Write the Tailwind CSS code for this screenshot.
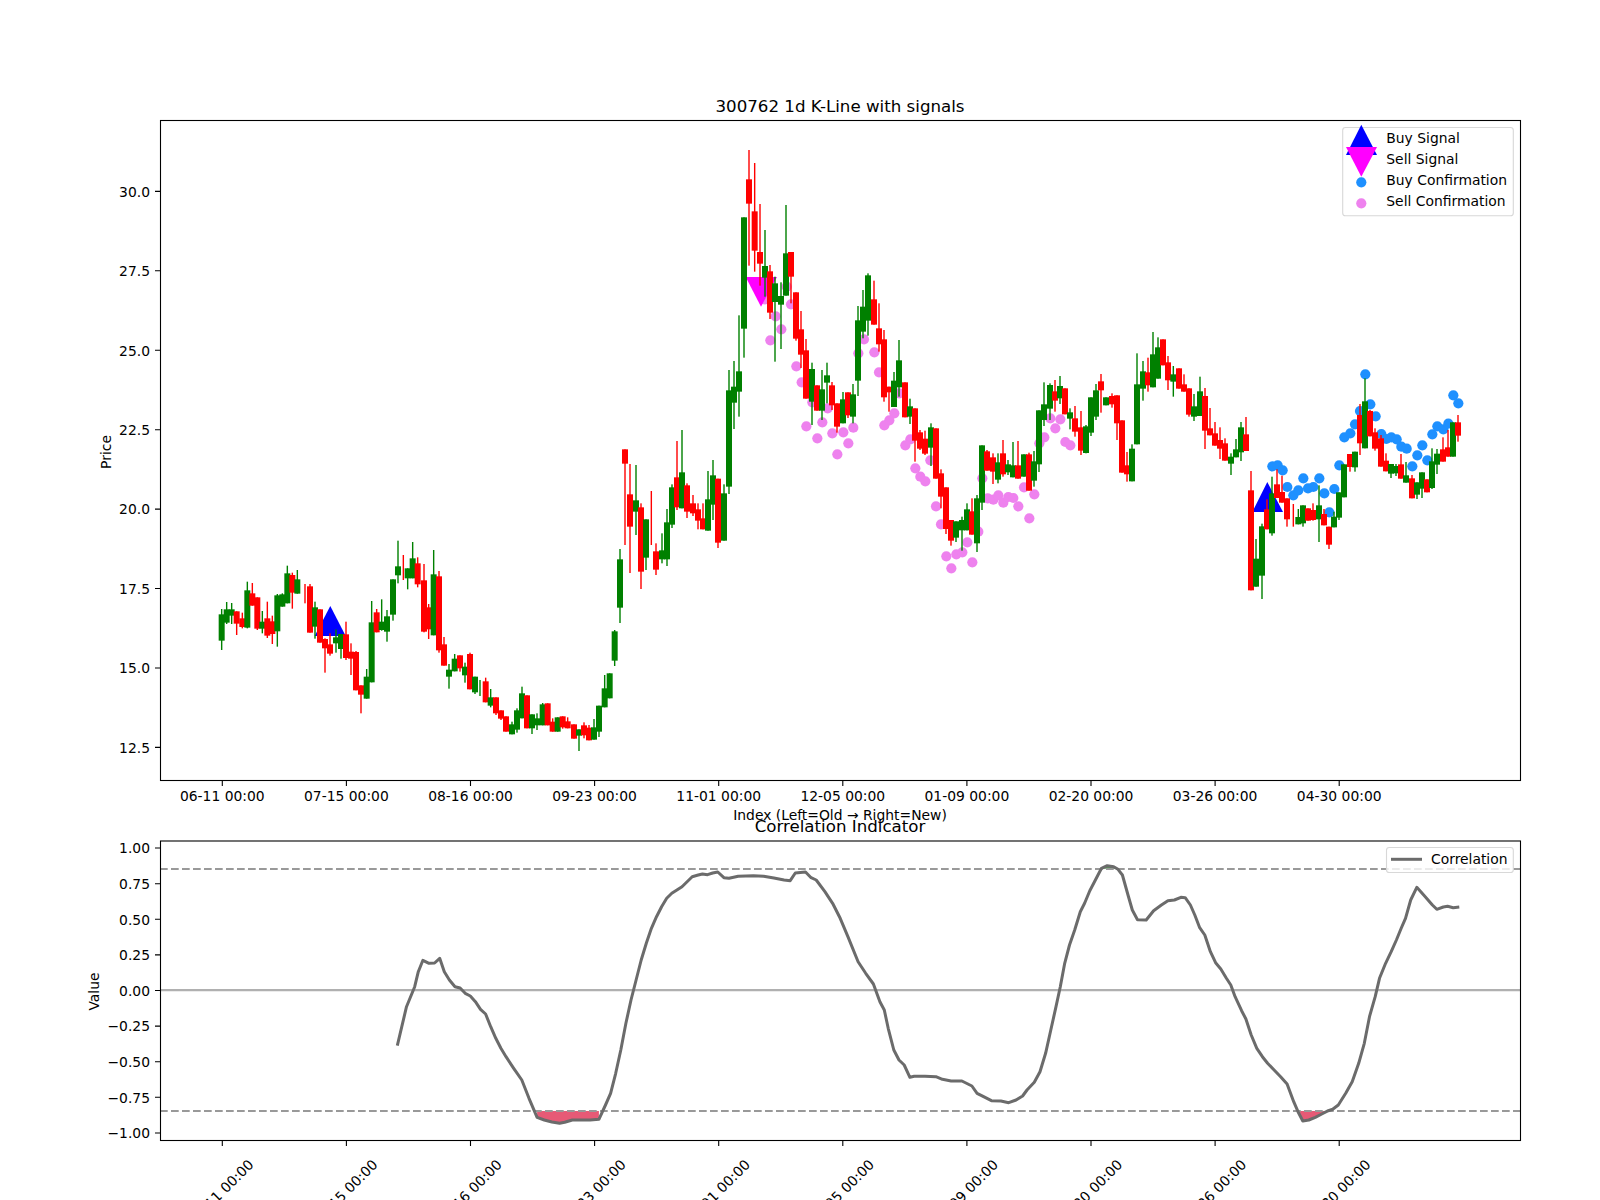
<!DOCTYPE html>
<html lang="en">
<head>
<meta charset="utf-8">
<title>300762 1d K-Line with signals</title>
<script src="https://cdn.jsdelivr.net/npm/@tailwindcss/browser@4"></script>
</head>
<body class="m-0 bg-white">
<main class="w-[1600px] h-[1200px] overflow-hidden bg-white font-['DejaVu_Sans',sans-serif] text-black">
<svg class="block fill-black text-[13.89px]" width="1600" height="1200" viewBox="0 0 1600 1200" xmlns="http://www.w3.org/2000/svg">
  <!-- upper axes -->
  <g id="sellDots" fill="#ee82ee"></g>
  <g id="buyDots" fill="#1e90ff"></g>
  <polygon points="330.3,606 345.7,636 314.7,636" fill="#0000ff"/>
  <polygon points="1267.3,482 1283,512 1252.3,512" fill="#0000ff"/>
  <polygon points="745.7,277 777,277 761,306.7" fill="#ff00ff"/>
  <g id="candles"></g>
  <rect x="160.5" y="120.5" width="1360" height="660" fill="none" stroke="#000" stroke-width="1.1"/>
  <path d="M222.3 781V786M346.4 781V786M470.5 781V786M594.6 781V786M718.7 781V786M842.8 781V786M966.9 781V786M1091 781V786M1215.1 781V786M1339.2 781V786M160 747.4H155M160 668H155M160 588.5H155M160 509.1H155M160 429.7H155M160 350.3H155M160 270.8H155M160 191.4H155" stroke="#000" stroke-width="1.1" fill="none"/>
  <g text-anchor="middle">
    <text x="222.3" y="801">06-11 00:00</text><text x="346.4" y="801">07-15 00:00</text><text x="470.5" y="801">08-16 00:00</text><text x="594.6" y="801">09-23 00:00</text><text x="718.7" y="801">11-01 00:00</text><text x="842.8" y="801">12-05 00:00</text><text x="966.9" y="801">01-09 00:00</text><text x="1091" y="801">02-20 00:00</text><text x="1215.1" y="801">03-26 00:00</text><text x="1339.2" y="801">04-30 00:00</text>
  </g>
  <g text-anchor="end">
    <text x="150" y="752.7">12.5</text><text x="150" y="673.3">15.0</text><text x="150" y="593.8">17.5</text><text x="150" y="514.4">20.0</text><text x="150" y="435">22.5</text><text x="150" y="355.6">25.0</text><text x="150" y="276.1">27.5</text><text x="150" y="196.7">30.0</text>
  </g>
  <text x="840" y="111.5" text-anchor="middle" class="text-[16.67px]">300762 1d K-Line with signals</text>
  <text x="840" y="820" text-anchor="middle">Index (Left=Old → Right=New)</text>
  <text transform="translate(111 452) rotate(-90)" text-anchor="middle">Price</text>
  <!-- upper legend -->
  <rect x="1342.7" y="127.5" width="170.6" height="88.2" rx="2.8" fill="#fff" fill-opacity="0.8" stroke="#d8d8d8" stroke-width="1.1"/>
  <polygon points="1361.3,124.7 1377,155 1346,155" fill="#0000ff"/>
  <polygon points="1346,147 1377,147 1361.3,176.7" fill="#ff00ff"/>
  <circle cx="1361.3" cy="182.3" r="5.1" fill="#1e90ff"/>
  <circle cx="1361.3" cy="203.3" r="5.1" fill="#ee82ee"/>
  <text x="1386.3" y="143.2">Buy Signal</text>
  <text x="1386.3" y="164">Sell Signal</text>
  <text x="1386.3" y="185">Buy Confirmation</text>
  <text x="1386.3" y="206">Sell Confirmation</text>

  <!-- lower axes -->
  <polygon id="fillA" fill="#dc143c" fill-opacity="0.7"/>
  <polygon id="fillB" fill="#dc143c" fill-opacity="0.7"/>
  <polygon id="fillC" fill="#008000" fill-opacity="0.7"/>
  <path d="M160 869H1520M160 1111H1520" stroke="#999" stroke-width="2.2" stroke-dasharray="7.7 3.3" fill="none"/>
  <path d="M160 990.2H1520" stroke="#b0b0b0" stroke-width="2.2" fill="none"/>
  <polyline id="curve" fill="none" stroke="#6b6b6b" stroke-width="3" stroke-linejoin="round"/>
  <rect x="160.5" y="841" width="1360" height="299.5" fill="none" stroke="#000" stroke-width="1.1"/>
  <path d="M222.3 1141V1146M346.4 1141V1146M470.5 1141V1146M594.6 1141V1146M718.7 1141V1146M842.8 1141V1146M966.9 1141V1146M1091 1141V1146M1215.1 1141V1146M1339.2 1141V1146M160 848H155M160 883.7H155M160 919.3H155M160 954.9H155M160 990.5H155M160 1026.1H155M160 1061.7H155M160 1097.3H155M160 1133H155" stroke="#000" stroke-width="1.1" fill="none"/>
  <g text-anchor="end">
    <text x="150" y="853.3">1.00</text><text x="150" y="889">0.75</text><text x="150" y="924.6">0.50</text><text x="150" y="960.2">0.25</text><text x="150" y="995.8">0.00</text><text x="150" y="1031.4">−0.25</text><text x="150" y="1067">−0.50</text><text x="150" y="1102.6">−0.75</text><text x="150" y="1138.3">−1.00</text>
  </g>
  <g text-anchor="middle">
    <text transform="translate(221 1192) rotate(-45)" y="5">06-11 00:00</text>
    <text transform="translate(345.1 1192) rotate(-45)" y="5">07-15 00:00</text>
    <text transform="translate(469.2 1192) rotate(-45)" y="5">08-16 00:00</text>
    <text transform="translate(593.3 1192) rotate(-45)" y="5">09-23 00:00</text>
    <text transform="translate(717.4 1192) rotate(-45)" y="5">11-01 00:00</text>
    <text transform="translate(841.5 1192) rotate(-45)" y="5">12-05 00:00</text>
    <text transform="translate(965.6 1192) rotate(-45)" y="5">01-09 00:00</text>
    <text transform="translate(1089.7 1192) rotate(-45)" y="5">02-20 00:00</text>
    <text transform="translate(1213.8 1192) rotate(-45)" y="5">03-26 00:00</text>
    <text transform="translate(1337.9 1192) rotate(-45)" y="5">04-30 00:00</text>
  </g>
  <text x="840" y="832" text-anchor="middle" class="text-[16.67px]">Correlation Indicator</text>
  <text transform="translate(99 991.5) rotate(-90)" text-anchor="middle">Value</text>
  <!-- lower legend -->
  <rect x="1386.5" y="847.5" width="126.8" height="25" rx="2.8" fill="#fff" fill-opacity="0.8" stroke="#d8d8d8" stroke-width="1.1"/>
  <path d="M1391 859.3H1422" stroke="#6b6b6b" stroke-width="3" fill="none"/>
  <text x="1431" y="864.2">Correlation</text>
</svg>
</main>
<script>
var NS = 'http://www.w3.org/2000/svg';
function el(parent, tag, attrs) {
  var n = document.createElementNS(NS, tag);
  for (var k in attrs) n.setAttribute(k, attrs[k]);
  parent.appendChild(n);
}
// each section: origin x, origin y, then candles [x, bodyTop, bodyBottom, wickHigh, wickLow, green?]
var sections = [
 [140,500,[[245,343,422,327,450,1],[260,328,368,306,372,1],[275,328,347,309,372,1],[290,334,371,334,405,0],[307,355,381,338,385,0],[322,271,383,245,385,1],[337,280,317,249,317,0],[352,292,386,292,390,0],[367,365,386,333,400,1],[382,355,407,305,414,0],[397,364,402,347,432,0],[412,286,394,282,440,1],[427,283,320,280,320,1],[442,220,310,197,310,1],[457,225,278,218,326,0],[472,238,281,210,281,1],[495,252,253,252,310,0],[510,259,398,252,398,0],[525,322,380,305,416,1],[540,328,428,328,428,0],[555,417,445,415,518,0],[570,433,461,400,467,0],[588,412,430,388,458,1],[603,402,447,402,476,1],[618,403,474,365,480,0],[633,455,476,430,525,0],[648,456,571,453,571,0],[663,556,584,556,640,0],[680,530,596,507,596,1],[695,367,547,303,547,1],[710,337,397,327,397,0],[725,365,390,298,392,1],[741,349,395,330,425,1],[759,238,344,238,362,1],[774,199,226,122,250,1],[790,165,166,165,240,0],[803,205,235,205,268,1],[818,175,235,126,235,1],[833,190,253,172,262,0],[852,241,395,192,397,0],[866,322,388,312,417,0],[881,223,406,150,406,1],[897,229,451,213,458,0],[912,433,497,411,497,0],[927,509,530,492,566,1],[944,476,514,462,514,1],[960,466,505,466,515,0],[975,500,526,488,548,1]]],
 [470,420,[[0,702,808,698,808,0],[15,770,817,770,822,1],[30,780,781,780,828,1],[47,784,847,773,847,0],[62,832,857,807,862,1],[78,832,880,832,885,0],[93,871,896,871,900,0],[108,889,935,889,935,0],[126,913,943,905,943,1],[141,871,929,865,938,1],[156,820,895,800,895,1],[171,826,925,826,925,0],[186,883,925,883,942,1],[201,895,916,880,930,1],[218,853,916,849,916,1],[233,850,916,850,916,0],[248,905,935,895,935,0],[263,892,935,892,935,1],[278,889,922,889,926,0],[293,904,925,892,925,0],[312,913,956,913,956,0],[327,928,947,928,993,1],[342,916,946,907,955,0],[357,923,961,915,961,0],[372,922,959,897,959,1],[387,857,935,857,951,1],[404,805,862,765,862,1],[419,760,835,760,835,1],[434,634,722,630,738,1],[450,418,563,387,609,1],[465,88,131,88,375,0],[480,223,320,132,459,0],[498,241,275,135,345,1],[513,262,455,250,507,0],[528,298,413,298,450,1],[544,213,214,213,375,0],[558,394,449,370,465,0],[576,391,418,340,430,1],[591,307,418,267,438,1],[606,202,314,193,324,1],[621,172,262,63,270,0],[636,157,265,30,265,1],[651,196,275,190,294,0],[669,250,280,225,288,0],[684,268,302,250,328,0],[699,295,328,250,328,0],[714,238,332,153,332,1],[729,166,254,120,300,1],[744,176,368,176,384,0],[762,220,362,193,362,1]]],
 [680,130,[[147,781,1070,720,1092,1],[162,770,818,693,897,1],[177,724,785,556,860,1],[192,262,596,262,683,1],[207,148,221,60,407,0],[224,244,362,99,425,0],[240,366,401,222,467,0],[255,408,443,300,500,1],[270,424,548,405,567,0],[285,460,516,440,695,1],[303,498,524,457,657,1],[318,370,497,225,497,1],[333,366,440,366,520,0],[348,487,626,487,632,0],[363,598,674,543,714,0],[378,661,806,627,806,0],[396,717,815,698,885,1],[411,766,842,766,842,0],[426,778,842,720,870,1],[441,736,758,698,820,1],[456,766,826,756,840,0],[471,820,890,820,908,0],[489,808,880,786,880,1],[504,787,856,787,864,0],[519,793,860,762,880,1],[534,571,752,528,798,1],[549,530,605,480,625,1],[564,436,572,430,617,1],[582,508,584,452,584,0],[597,595,643,520,665,0],[612,628,802,600,815,0],[627,770,787,770,845,0],[642,752,831,726,831,1],[657,691,772,630,800,1],[675,757,862,757,862,0],[690,829,860,806,882,1]]],
 [880,380,[[105,85,182,85,245,0],[120,157,206,150,210,0],[135,176,221,152,225,0],[153,142,203,130,258,1],[168,145,296,145,296,0],[183,280,350,268,385,0],[198,322,447,322,462,0],[213,420,482,420,497,0],[228,424,473,424,486,1],[246,420,451,410,512,1],[261,388,451,370,451,1],[276,394,464,355,464,0],[291,355,490,345,516,1],[306,196,368,196,390,1],[321,214,272,210,272,0],[339,232,275,220,312,0],[354,247,299,220,310,1],[369,220,283,180,290,0],[384,253,277,240,285,1],[399,256,292,186,292,1],[414,256,296,183,296,0],[432,223,290,223,290,1],[447,223,332,218,332,0],[462,244,302,213,320,1]]],
 [1000,320,[[117,271,433,271,456,1],[132,253,300,187,318,1],[150,195,266,190,300,1],[165,214,242,180,275,0],[180,198,235,168,252,1],[195,205,283,205,283,0],[210,277,296,265,328,1],[225,295,335,258,350,0],[243,322,392,273,405,0],[258,319,399,315,400,1],[273,232,338,232,348,1],[288,211,290,192,300,1],[303,184,211,162,278,0],[318,232,256,232,256,1],[336,228,253,220,263,0],[351,226,310,226,360,0],[366,301,458,301,458,0],[381,436,463,396,485,0],[396,386,484,373,484,1],[411,193,373,100,373,1],[429,154,206,123,242,1],[444,157,196,113,215,0],[459,103,202,36,202,1],[474,82,176,52,176,1],[489,58,136,58,136,0],[504,127,181,108,210,0],[520,163,185,138,230,1],[537,145,206,145,206,0],[552,193,215,163,215,0],[567,205,284,205,290,0],[582,259,290,222,303,1]]],
 [1200,360,[[0,94,168,50,168,1],[15,108,212,84,267,0],[30,205,226,144,226,0],[45,220,257,186,257,0],[60,240,266,202,297,0],[75,250,302,235,302,0],[93,290,311,280,345,1],[108,268,292,237,292,1],[123,202,277,186,303,1],[138,223,273,171,273,0],[153,391,691,333,691,0],[168,596,680,537,680,1],[186,499,647,491,717,1],[201,448,508,418,508,0],[216,400,520,350,527,1],[231,373,414,328,414,0],[246,396,428,347,428,0],[261,415,478,415,500,0],[280,432,433,432,500,0],[295,471,493,447,493,1],[309,436,490,436,500,1],[324,445,482,445,482,0],[339,450,480,430,482,0],[357,436,478,376,546,1],[372,462,496,447,496,0],[387,500,554,500,567,0],[402,470,502,455,502,1],[417,397,473,397,480,1],[432,313,412,313,412,1],[450,282,321,282,335,0],[465,275,322,275,335,1],[480,165,250,132,285,0],[495,124,265,55,265,1],[510,153,229,150,229,0],[525,217,266,205,272,0],[543,235,320,225,320,0],[558,302,334,280,334,0],[573,312,341,312,354,1],[588,318,340,312,348,1],[603,313,356,282,356,0],[618,346,368,306,368,1],[636,355,415,345,415,0],[651,367,404,367,417,1],[666,337,386,337,414,1],[681,358,397,358,397,0],[696,304,384,265,387,1],[711,281,314,267,342,1],[729,268,305,232,305,0],[744,262,290,210,290,0],[759,187,290,187,290,1],[774,187,227,165,245,0]]]
];
var cg = document.getElementById('candles');
sections.forEach(function (s) {
  s[2].forEach(function (c) {
    var x = s[0] + c[0] / 3, col = c[5] ? '#008000' : '#ff0000';
    el(cg, 'rect', {x: (x - 0.7).toFixed(2), y: (s[1] + c[3] / 3).toFixed(2), width: 1.4, height: ((c[4] - c[3]) / 3).toFixed(2), fill: col});
    if (c[2] - c[1] > 2) el(cg, 'rect', {x: (x - 3).toFixed(2), y: (s[1] + c[1] / 3).toFixed(2), width: 6, height: ((c[2] - c[1]) / 3).toFixed(2), fill: col});
  });
});
function dots(id, ox, oy, pts) {
  var g = document.getElementById(id);
  pts.forEach(function (p) { el(g, 'circle', {cx: (ox + p[0] / 3).toFixed(2), cy: (oy + p[1] / 3).toFixed(2), r: 5.1}); });
}
dots('sellDots', 680, 130, [[255,508],[320,470],[333,523],[287,559],[304,598],[271,631],[349,709],[365,757],[397,817],[443,835],[379,889],[427,877],[412,925],[457,910],[490,907],[520,893],[505,940],[472,973],[552,628],[535,670],[583,667],[597,727]]);
dots('sellDots', 880, 380, [[58,40],[43,100],[28,121],[13,136],[91,178],[76,196],[151,241],[106,265],[121,290],[136,304],[168,379],[183,433],[199,529],[214,565],[229,523],[247,517],[262,487],[277,547],[295,455],[307,295],[323,355],[340,359],[355,346],[370,368],[385,351],[400,354],[415,379],[432,322],[448,415],[463,343],[478,190],[493,172],[511,115],[526,145],[541,118],[556,186],[571,196]]);
dots('buyDots', 1200, 360, [[217,319],[233,316],[248,331],[262,381],[280,406],[295,391],[310,355],[324,385],[340,381],[358,355],[373,400],[388,457],[403,387],[418,316],[433,232],[451,220],[465,193],[480,153],[496,43],[511,133],[527,169],[544,222],[559,237],[574,232],[590,238],[604,260],[620,266],[637,319],[652,286],[667,256],[682,301],[697,223],[712,199],[730,208],[745,191],[760,106],[775,130]]);
function a(p) { return (80 + p[0] / 1.96).toFixed(1) + ',' + (780 + p[1] / 3).toFixed(1); }
function b(p) { return (860 + p[0] / 2.306).toFixed(1) + ',' + (820 + p[1] / 3).toFixed(1); }
var ca = [[622,797],[640,680],[656,620],[663,575],[672,541],[684,550],[695,549],[705,535],[714,575],[724,600],[735,620],[745,624],[755,640],[765,648],[775,665],[785,688],[795,702],[805,740],[815,775],[825,805],[835,830],[850,865],[866,900],[880,955],[896,1012],[910,1020],[925,1026],[940,1030],[950,1027],[965,1020],[1000,1020],[1017,1018],[1030,975],[1040,940],[1050,880],[1060,810],[1070,730],[1080,660],[1090,600],[1100,540],[1110,490],[1120,445],[1130,410],[1140,380],[1150,355],[1160,340],[1170,330],[1180,320],[1190,305],[1200,290],[1210,286],[1220,282],[1230,284],[1240,279],[1250,276],[1262,293],[1272,295],[1290,289],[1320,287],[1340,289],[1360,294],[1380,300],[1392,302],[1402,279],[1422,276],[1433,293],[1443,300],[1460,335],[1475,370],[1490,415],[1505,470],[1525,545],[1540,580],[1555,612]];
var cb = [[46,545],[56,570],[65,625],[78,690],[90,720],[102,735],[115,772],[125,769],[150,769],[175,770],[190,778],[210,783],[235,783],[258,798],[270,820],[285,830],[303,842],[325,843],[343,848],[360,840],[375,828],[385,810],[402,787],[415,755],[428,700],[440,630],[452,560],[462,500],[472,430],[483,375],[495,330],[508,275],[518,250],[530,212],[545,175],[557,145],[570,137],[585,140],[595,148],[605,165],[618,225],[628,270],[640,299],[660,300],[677,272],[695,255],[710,242],[725,240],[740,232],[750,233],[762,255],[772,285],[783,322],[795,345],[808,395],[820,428],[832,447],[845,475],[855,495],[865,530],[880,572],[890,597],[902,645],[915,685],[928,710],[940,730],[955,750],[970,770],[985,792],[1000,845],[1010,875],[1021,903],[1035,900],[1050,892],[1065,882],[1080,872],[1090,868],[1103,855],[1120,820],[1135,785],[1150,730],[1163,670],[1175,590],[1188,530],[1198,475],[1212,430],[1225,395],[1237,360],[1248,325],[1258,295],[1270,240],[1284,202],[1300,225],[1320,255],[1330,268],[1345,261],[1355,259],[1368,263],[1382,261]];
document.getElementById('curve').setAttribute('points', ca.map(a).concat(cb.map(b)).join(' '));
document.getElementById('fillA').setAttribute('points', [[896,993]].concat(ca.slice(24, 32), [[1017,993]]).map(a).join(' '));
document.getElementById('fillB').setAttribute('points', [[1010,873],[1021,903],[1035,900],[1050,892],[1065,882],[1078,873]].map(b).join(' '));
document.getElementById('fillC').setAttribute('points', [[557,146],[570,137],[585,140],[592,146]].map(b).join(' '));
</script>
</body>
</html>
